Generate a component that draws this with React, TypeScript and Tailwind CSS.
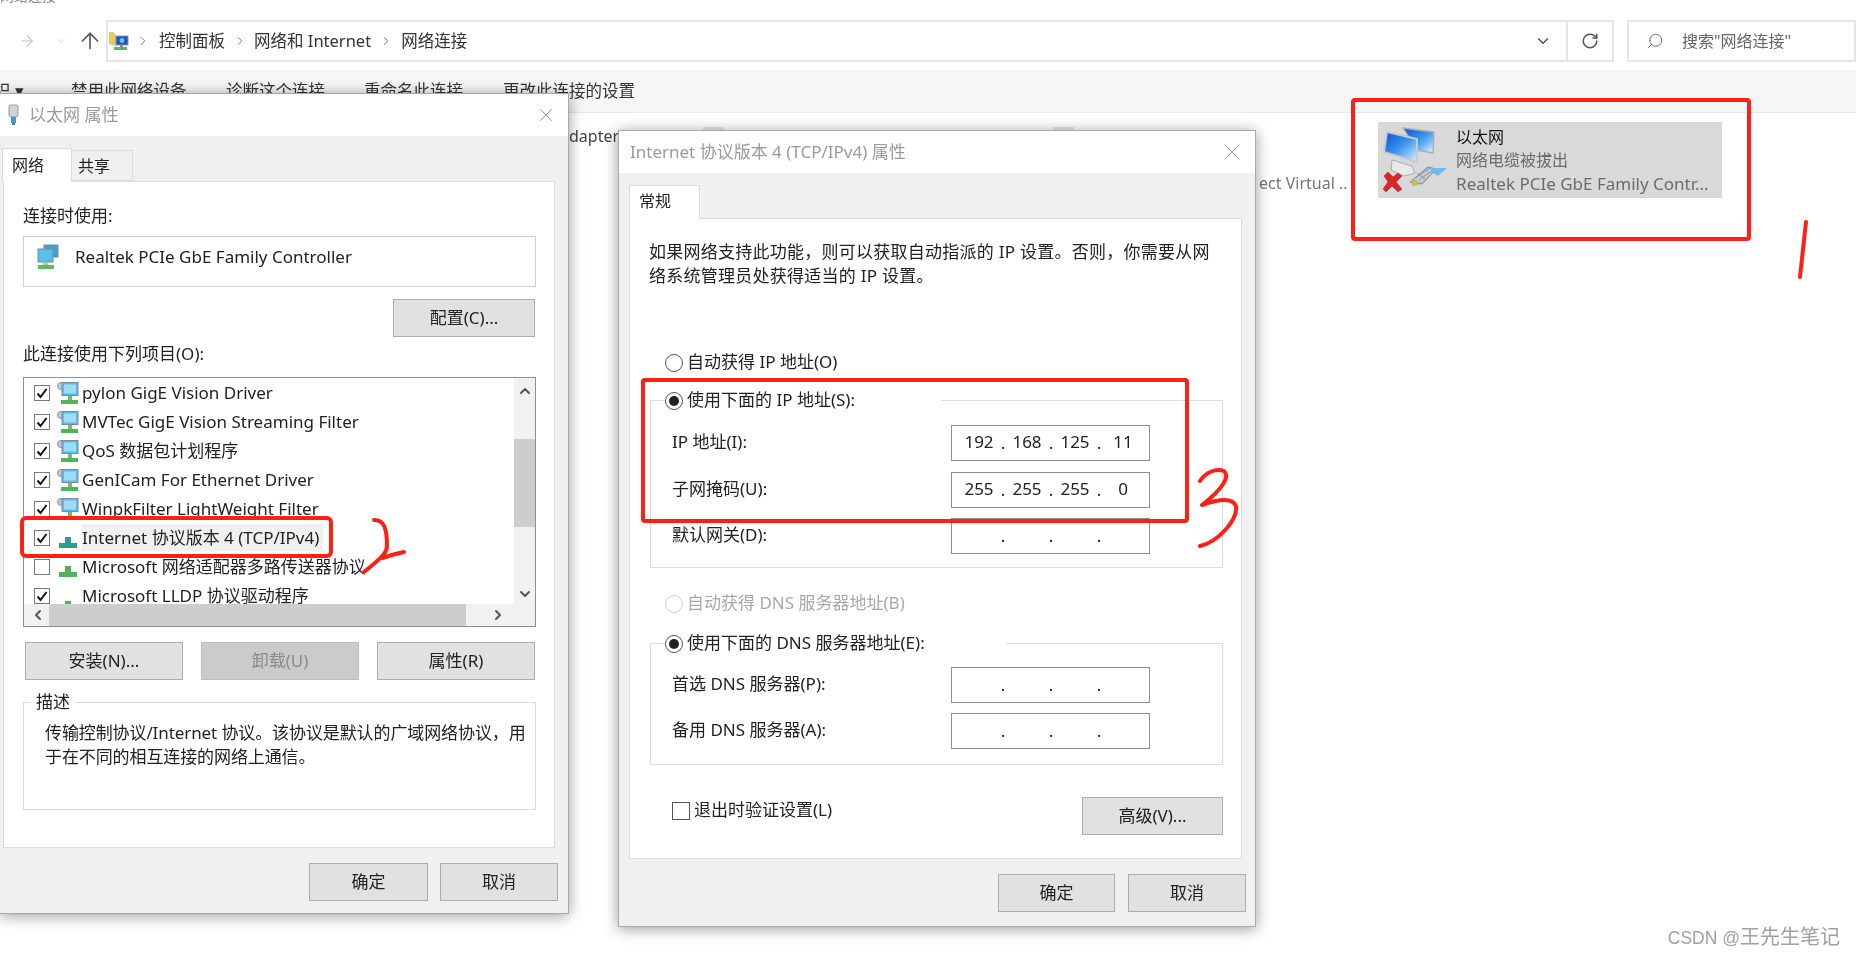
import { ChevronDown, ChevronLeft, ChevronRight, ChevronUp, ArrowRight, ArrowUp, RotateCw, Search, X } from "lucide-react";
import type { ReactNode } from "react";

const listRows = [
  { label: "pylon GigE Vision Driver", checked: true, icon: "service" },
  { label: "MVTec GigE Vision Streaming Filter", checked: true, icon: "service" },
  { label: "QoS 数据包计划程序", checked: true, icon: "service" },
  { label: "GenICam For Ethernet Driver", checked: true, icon: "service" },
  { label: "WinpkFilter LightWeight Filter", checked: true, icon: "service" },
  { label: "Internet 协议版本 4 (TCP/IPv4)", checked: true, icon: "protocol", selected: true },
  { label: "Microsoft 网络适配器多路传送器协议", checked: false, icon: "protocol" },
  { label: "Microsoft LLDP 协议驱动程序", checked: true, icon: "dot" },
];

function ServiceIcon() {
  return (
    <svg width="22" height="24" viewBox="0 0 22 24">
      <circle cx="4" cy="5" r="3.5" fill="#c4c8cc" stroke="#8f959a" />
      <rect x="5" y="1.5" width="16" height="13" fill="#5fb8ee" stroke="#7d8b96" />
      <rect x="7" y="3.5" width="12" height="9" fill="#9bdcfb" />
      <rect x="11" y="15" width="4" height="4" fill="#6fbf73" />
      <rect x="4" y="19" width="17" height="4" fill="#4fb45a" />
    </svg>
  );
}

function ProtocolIcon({ teal }: { teal?: boolean }) {
  const color = teal ? "#2f9c94" : "#4fb45a";
  return (
    <svg width="22" height="24" viewBox="0 0 22 24">
      <rect x="8" y="11" width="6" height="6" fill={color} />
      <rect x="2" y="17" width="18" height="5" fill={color} />
    </svg>
  );
}

function AdapterIcon() {
  return (
    <svg width="24" height="28" viewBox="0 0 24 28">
      <rect x="8" y="1" width="14" height="12" fill="#3f9fd8" stroke="#7d8b96" />
      <rect x="2" y="5" width="15" height="13" fill="#53c0ee" stroke="#7d8b96" />
      <rect x="7" y="18" width="5" height="3" fill="#9ccf9f" />
      <rect x="2" y="21" width="16" height="4" fill="#5cb967" />
    </svg>
  );
}

function ConnectionIcon() {
  return (
    <svg width="70" height="68" viewBox="0 0 70 68">
      <defs>
        <linearGradient id="screen" x1="0" y1="0" x2="1" y2="1">
          <stop offset="0" stopColor="#0b4fd6" />
          <stop offset="0.5" stopColor="#3a94ec" />
          <stop offset="1" stopColor="#dff2fc" />
        </linearGradient>
      </defs>
      <path d="M35 34 L36 46 L48 38 L51 27 Z" fill="#d8dadb" />
      <path d="M21 2 L52 6 L51 27 L35 24 Z" fill="url(#screen)" stroke="#aab1b6" strokeWidth="1.5" />
      <path d="M5 6 L35 13 L35 36 L2 26 Z" fill="url(#screen)" stroke="#c6cacd" strokeWidth="2" />
      <path d="M10 34 L30 40 L33 47 L22 50 L9 44 Z" fill="#e8e9ea" stroke="#a9adb0" />
      <path d="M28 56 L46 41 L54 43 L40 58 Z" fill="#c3ccd2" stroke="#75828a" />
      <path d="M33 52 L48 42 M37 54 L51 44 M35 47 L44 54" stroke="#8b969d" strokeWidth="1" />
      <path d="M48 42 L65 42 L56 50 L51 47 Z" fill="#74b8e8" />
      <path d="M29 54 L35 54 L37 59 L30 60 Z" fill="#c9b86a" />
      <path d="M2 50 L6 46 L11 51 L16 47 L20 50 L14 56 L20 63 L16 66 L10 60 L4 66 L1 63 L6 56 Z" fill="#dc2529" stroke="#b51c20" strokeWidth="0.5" />
    </svg>
  );
}

function FolderNetIcon() {
  return (
    <svg width="22" height="21" viewBox="0 0 22 21">
      <path d="M0 1 L4 1 L7 4 L7 15 L0 13 Z" fill="#e9c768" />
      <rect x="7" y="5" width="12" height="9" fill="#1c4fc4" stroke="#8a9aa8" />
      <circle cx="13" cy="9.5" r="2.5" fill="#6fbcee" />
      <rect x="5" y="16" width="13" height="3" fill="#57b765" />
      <rect x="11" y="14" width="3" height="2" fill="#8a9298" />
    </svg>
  );
}

function PlugIcon() {
  return (
    <svg width="13" height="22" viewBox="0 0 13 22">
      <rect x="2" y="1" width="9" height="12" rx="2" fill="#cfd4d8" stroke="#8f9aa2" />
      <rect x="4" y="13" width="5" height="6" fill="#3f9ad0" />
      <rect x="5" y="19" width="3" height="2" fill="#2c7aa8" />
    </svg>
  );
}

function Btn({ children, className, disabled }: { children: ReactNode; className: string; disabled?: boolean }) {
  return (
    <div
      className={`flex h-[38px] items-center justify-center border text-[17px] ${className} ${
        disabled ? "border-[#bcbcbc] bg-[#cbcbcb] text-[#8a8a8a]" : "border-[#adadad] bg-[#e1e1e1] text-[#222]"
      }`}
    >
      {children}
    </div>
  );
}

function Check({ checked }: { checked: boolean }) {
  return (
    <span className="flex h-[16px] w-[16px] shrink-0 items-center justify-center border border-[#7a7a7a] bg-white">
      {checked && (
        <svg width="12" height="12" viewBox="0 0 12 12">
          <path d="M1.5 6.5 L4.5 10 L10.5 2" fill="none" stroke="#111" strokeWidth="2" />
        </svg>
      )}
    </span>
  );
}

function Radio({ checked, disabled }: { checked?: boolean; disabled?: boolean }) {
  return (
    <span
      className={`flex h-[18px] w-[18px] shrink-0 items-center justify-center rounded-full border bg-white ${
        disabled ? "border-[#cfcfcf]" : "border-[#555]"
      }`}
    >
      {checked && <span className="h-[10px] w-[10px] rounded-full bg-[#222]" />}
    </span>
  );
}

function IpField({ parts }: { parts: string[] }) {
  return (
    <div className="flex h-[36px] w-[199px] items-center border border-[#8f8f8f] bg-white pl-[3px] text-[17px] text-[#222]">
      {parts.map((part, i) => (
        <div key={i} className="flex items-center">
          <span className="w-[48px] pb-[3px] text-center">{part}</span>
          {i < 3 && <span className="flex w-0 justify-center">.</span>}
        </div>
      ))}
    </div>
  );
}

function IpRow({ label, parts, className }: { label: string; parts: string[]; className: string }) {
  return (
    <div className={`flex items-center justify-between pl-[21px] pr-[72px] ${className}`}>
      <span className="pb-[2px] text-[17px] text-[#222]">{label}</span>
      <IpField parts={parts} />
    </div>
  );
}

function TitleBar({ title, closeRight, children }: { title: string; closeRight: string; children?: ReactNode }) {
  return (
    <div className="flex h-[42px] shrink-0 items-center bg-white text-[#9a9a9a]">
      {children}
      <span className="pb-[1px] text-[17px]">{title}</span>
      <X className={`ml-auto h-[22px] w-[22px] ${closeRight}`} strokeWidth={1} color="#8c8c8c" />
    </div>
  );
}

function ConnectionDialog() {
  return (
    <div className="absolute left-0 top-[93px] flex h-[821px] w-[569px] flex-col border-r border-t border-b border-[#a9a9a9] bg-[#f0f0f0] shadow-[0_2px_14px_rgba(0,0,0,0.4)]">
      <TitleBar title="以太网 属性" closeRight="mr-[11px]">
        <span className="ml-[7px] mr-[9px]">
          <PlugIcon />
        </span>
      </TitleBar>
      <div className="flex h-[45px] items-end pl-[2px]">
        <div className="relative z-10 -mb-px flex h-[34px] w-[70px] items-center border border-b-0 border-[#dcdcdc] bg-white pb-[2px] pl-[9px] text-[16px] text-[#222]">
          网络
        </div>
        <div className="flex h-[31px] w-[61px] items-center border border-l-0 border-[#dcdcdc] pl-[6px] text-[16px] text-[#222]">
          共享
        </div>
      </div>
      <div className="ml-[3px] flex h-[667px] w-[552px] flex-col border border-[#dcdcdc] bg-white pl-[19px] pr-[18px] pt-[22px] text-[17px] text-[#222]">
        <div className="h-[24px] leading-[24px]">连接时使用:</div>
        <div className="mt-[8px] flex h-[51px] items-start border border-[#cfcfcf] pl-[12px] pt-[7px]">
          <AdapterIcon />
          <span className="ml-[15px] leading-[26px]">Realtek PCIe GbE Family Controller</span>
        </div>
        <Btn className="mr-[1px] mt-[12px] w-[142px] self-end">配置(C)...</Btn>
        <div className="mt-[5px] h-[24px] leading-[24px]">此连接使用下列项目(O):</div>
        <div className="mt-[11px] flex h-[250px] flex-col border border-[#8b9097]">
          <div className="flex h-[226px]">
            <div className="h-full flex-1 overflow-hidden">
              {listRows.map((row) => (
                <div key={row.label} className="flex h-[29px] items-center pl-[10px]">
                  <Check checked={row.checked} />
                  <span className="ml-[7px] flex w-[22px] shrink-0 justify-center">
                    {row.icon === "service" && <ServiceIcon />}
                    {row.icon === "protocol" && <ProtocolIcon teal={row.selected} />}
                    {row.icon === "dot" && (
                      <svg width="22" height="24" viewBox="0 0 22 24">
                        <rect x="8" y="17" width="6" height="6" fill="#4fb45a" />
                      </svg>
                    )}
                  </span>
                  <span className={`ml-[3px] whitespace-nowrap pr-[4px] leading-[27px] ${row.selected ? "bg-[#f0f0f0]" : ""}`}>
                    {row.label}
                  </span>
                </div>
              ))}
            </div>
            <div className="flex h-full w-[21px] flex-col items-center bg-[#f1f1f1]">
              <ChevronUp className="mt-[5px] h-[16px] w-[16px] text-[#555]" strokeWidth={3} />
              <div className="mt-[40px] h-[88px] w-full bg-[#cdcdcd]" />
              <ChevronDown className="mt-[59px] h-[16px] w-[16px] text-[#555]" strokeWidth={3} />
            </div>
          </div>
          <div className="flex h-[22px] items-center bg-[#f1f1f1]">
            <ChevronLeft className="ml-[6px] h-[16px] w-[16px] text-[#555]" strokeWidth={3} />
            <div className="ml-[3px] h-full w-[417px] bg-[#cdcdcd]" />
            <ChevronRight className="ml-[24px] h-[16px] w-[16px] text-[#555]" strokeWidth={3} />
          </div>
        </div>
        <div className="mt-[15px] flex justify-between pl-[2px] pr-[1px]">
          <Btn className="w-[158px]">安装(N)...</Btn>
          <Btn className="w-[158px]" disabled>
            卸载(U)
          </Btn>
          <Btn className="w-[158px]">属性(R)</Btn>
        </div>
        <div className="relative mt-[22px] h-[108px] whitespace-nowrap border border-[#dcdcdc] pl-[21px] pt-[18px] leading-[24px] tracking-[-0.1px]">
          <span className="absolute -top-[13px] left-[7px] bg-white px-[5px] text-[17px]">描述</span>
          传输控制协议/Internet 协议。该协议是默认的广域网络协议，用
          <br />
          于在不同的相互连接的网络上通信。
        </div>
      </div>
      <div className="mt-[15px] flex justify-end gap-[12px] pr-[10px]">
        <Btn className="w-[119px]">确定</Btn>
        <Btn className="w-[118px]">取消</Btn>
      </div>
    </div>
  );
}

function IpDialog() {
  return (
    <div className="absolute left-[618px] top-[130px] flex h-[797px] w-[638px] flex-col border border-[#a9a9a9] bg-[#f0f0f0] shadow-[0_2px_14px_rgba(0,0,0,0.4)]">
      <TitleBar title="Internet 协议版本 4 (TCP/IPv4) 属性" closeRight="mr-[12px]">
        <span className="w-[11px]" />
      </TitleBar>
      <div className="flex h-[45px] items-end pl-[10px]">
        <div className="relative z-10 -mb-px flex h-[34px] w-[71px] items-center border border-b-0 border-[#dcdcdc] bg-white pb-[4px] pl-[9px] text-[16px] text-[#222]">
          常规
        </div>
      </div>
      <div className="ml-[10px] flex h-[641px] w-[613px] flex-col border border-[#dcdcdc] bg-white pt-[21px] text-[17px] text-[#222]">
        <p className="ml-[19px] whitespace-nowrap leading-[24px] tracking-[0.25px]">
          如果网络支持此功能，则可以获取自动指派的 IP 设置。否则，你需要从网
          <br />
          络系统管理员处获得适当的 IP 设置。
        </p>
        <div className="ml-[35px] mt-[63px] flex h-[24px] items-center gap-[4px]">
          <Radio />
          <span className="pb-[2px]">自动获得 IP 地址(O)</span>
        </div>
        <div className="relative ml-[20px] mt-[25px] h-[168px] w-[573px] border border-[#dcdcdc] pt-[24px]">
          <div className="absolute -top-[12px] left-[14px] flex h-[24px] w-[276px] items-center gap-[4px] bg-white">
            <Radio checked />
            <span className="pb-[2px]">使用下面的 IP 地址(S):</span>
          </div>
          <IpRow label="IP 地址(I):" parts={["192", "168", "125", "11"]} className="" />
          <IpRow label="子网掩码(U):" parts={["255", "255", "255", "0"]} className="mt-[11px]" />
          <IpRow label="默认网关(D):" parts={["", "", "", ""]} className="mt-[10px]" />
        </div>
        <div className="ml-[35px] mt-[24px] flex h-[24px] items-center gap-[4px] text-[#a8a8a8]">
          <Radio disabled />
          <span className="pb-[2px]">自动获得 DNS 服务器地址(B)</span>
        </div>
        <div className="relative ml-[20px] mt-[27px] h-[122px] w-[573px] border border-[#dcdcdc] pt-[23px]">
          <div className="absolute -top-[12px] left-[14px] flex h-[24px] w-[341px] items-center gap-[4px] bg-white">
            <Radio checked />
            <span className="pb-[2px]">使用下面的 DNS 服务器地址(E):</span>
          </div>
          <IpRow label="首选 DNS 服务器(P):" parts={["", "", "", ""]} className="" />
          <IpRow label="备用 DNS 服务器(A):" parts={["", "", "", ""]} className="mt-[10px]" />
        </div>
        <div className="ml-[42px] mt-[32px] flex w-[551px] items-start justify-between">
          <div className="flex items-center gap-[4px]">
            <span className="flex h-[18px] w-[18px] border border-[#555] bg-white" />
            <span className="pb-[2px]">退出时验证设置(L)</span>
          </div>
          <Btn className="w-[141px]">高级(V)...</Btn>
        </div>
      </div>
      <div className="mt-[15px] flex justify-end gap-[13px] pr-[9px]">
        <Btn className="w-[117px]">确定</Btn>
        <Btn className="w-[118px]">取消</Btn>
      </div>
    </div>
  );
}

function Explorer() {
  return (
    <div className="flex h-full flex-col">
      <div className="h-[5px] overflow-hidden">
        <div className="-mt-[12px] text-[14px] leading-[16px] text-[#888]">网络连接</div>
      </div>
      <div className="mt-[15px] flex h-[42px] items-center text-[#333]">
        <ArrowRight className="ml-[18px] h-[18px] w-[18px] text-[#c8c8c8]" strokeWidth={1.5} />
        <ChevronDown className="ml-[19px] h-[12px] w-[12px] text-[#c8c8c8]" strokeWidth={1.5} />
        <ArrowUp className="ml-[10px] h-[26px] w-[26px] text-[#555]" strokeWidth={1.5} />
        <div className="ml-[3px] flex h-full w-[1508px] items-center border-2 border-[#e6e6e6] bg-white">
          <span className="ml-[1px]">
            <FolderNetIcon />
          </span>
          <ChevronRight className="ml-[5px] h-[14px] w-[14px] text-[#666]" strokeWidth={1.5} />
          <span className="ml-[9px] text-[16.5px]">控制面板</span>
          <ChevronRight className="ml-[8px] h-[14px] w-[14px] text-[#666]" strokeWidth={1.5} />
          <span className="ml-[7px] text-[16.5px]">网络和 Internet</span>
          <ChevronRight className="ml-[8px] h-[14px] w-[14px] text-[#666]" strokeWidth={1.5} />
          <span className="ml-[8px] text-[16.5px]">网络连接</span>
          <ChevronDown className="ml-auto mr-[14px] h-[18px] w-[18px] text-[#555]" strokeWidth={2} />
          <div className="flex h-full w-[46px] items-center justify-center border-l-2 border-[#e6e6e6]">
            <RotateCw className="h-[18px] w-[18px] text-[#555]" strokeWidth={2} />
          </div>
        </div>
        <div className="ml-[13px] flex h-full flex-1 items-center border-2 border-[#e6e6e6] bg-white text-[#666]">
          <Search className="ml-[17px] h-[18px] w-[18px] -scale-x-100 text-[#666]" strokeWidth={1.25} />
          <span className="ml-[18px] text-[16px]">搜索"网络连接"</span>
        </div>
      </div>
      <div className="mt-[8px] flex h-[43px] items-center border-b border-[#e8e8e8] bg-[#f5f6f7] pt-[1px] text-[16.5px] text-[#333]">
        <span className="w-[71px] -translate-x-[6px]">织 ▾</span>
        <span className="w-[155px]">禁用此网络设备</span>
        <span className="w-[138px]">诊断这个连接</span>
        <span className="w-[139px]">重命名此连接</span>
        <span>更改此连接的设置</span>
      </div>
      <div className="flex flex-1 items-start text-[16px]">
        <div className="ml-[569px] mt-[11px] leading-[24px] text-[#444]">dapter</div>
        <div className="ml-[640px] mt-[58px] w-[94px] whitespace-nowrap leading-[24px] text-[#777]">ect Virtual ..</div>
        <div className="ml-[25px] mt-[9px] flex h-[76px] w-[344px] items-center bg-[#d9d9d9] pl-[4px]">
          <ConnectionIcon />
          <div className="ml-[4px] flex flex-col text-[#6b6b6b]">
            <span className="h-[23px] leading-[23px] text-[#111]">以太网</span>
            <span className="h-[23px] leading-[23px]">网络电缆被拔出</span>
            <span className="h-[23px] text-[17px] leading-[23px]">Realtek PCIe GbE Family Contr...</span>
          </div>
        </div>
      </div>
    </div>
  );
}

// red marks drawn on top of the screenshot
function Annotations() {
  return (
    <>
      <div className="absolute left-[1351px] top-[98px] h-[143px] w-[400px] rounded-[4px] border-[4px] border-[#ff1f14]" />
      <div className="absolute left-[20px] top-[516px] h-[42px] w-[313px] rounded-[6px] border-[4px] border-[#ff1f14]" />
      <div className="absolute left-[641px] top-[378px] h-[145px] w-[548px] rounded-[4px] border-[4px] border-[#ff1f14]" />
      <svg className="absolute left-0 top-0 h-[957px] w-[1856px]" viewBox="0 0 1856 957" fill="none" stroke="#ff1f14" strokeWidth="4" strokeLinecap="round" strokeLinejoin="round">
        <path d="M1806 222 L1800 277" />
        <path d="M374 520 C384 520 387 528 387 546 C387 552 384 556 364 572 M404 552 C395 554 388 556 383 558" />
        <path d="M1200 481 C1206 472 1216 468 1224 471 C1230 476 1224 488 1202 505 C1216 500 1232 496 1236 506 C1238 520 1218 542 1200 546" />
      </svg>
    </>
  );
}

export default function App() {
  return (
    <div className="relative h-[957px] w-[1856px] overflow-hidden bg-white font-['Noto_Sans','Noto_Sans_CJK_SC',sans-serif] blur-[0.4px]">
      <Explorer />
      {/* tops of the file icons hidden behind the second dialog */}
      <div className="absolute left-[703px] top-[127px] h-[3px] w-[21px] bg-[#e4e8eb]" />
      <div className="absolute left-[1053px] top-[127px] h-[3px] w-[21px] bg-[#e4e8eb]" />
      <ConnectionDialog />
      <IpDialog />
      <Annotations />
      <div className="absolute bottom-[5px] right-[16px] font-['Liberation_Sans','Noto_Sans_CJK_SC',sans-serif] text-[20px] text-[#a0a0a0]">
        <span className="text-[17.5px]">CSDN @</span>王先生笔记
      </div>
    </div>
  );
}
